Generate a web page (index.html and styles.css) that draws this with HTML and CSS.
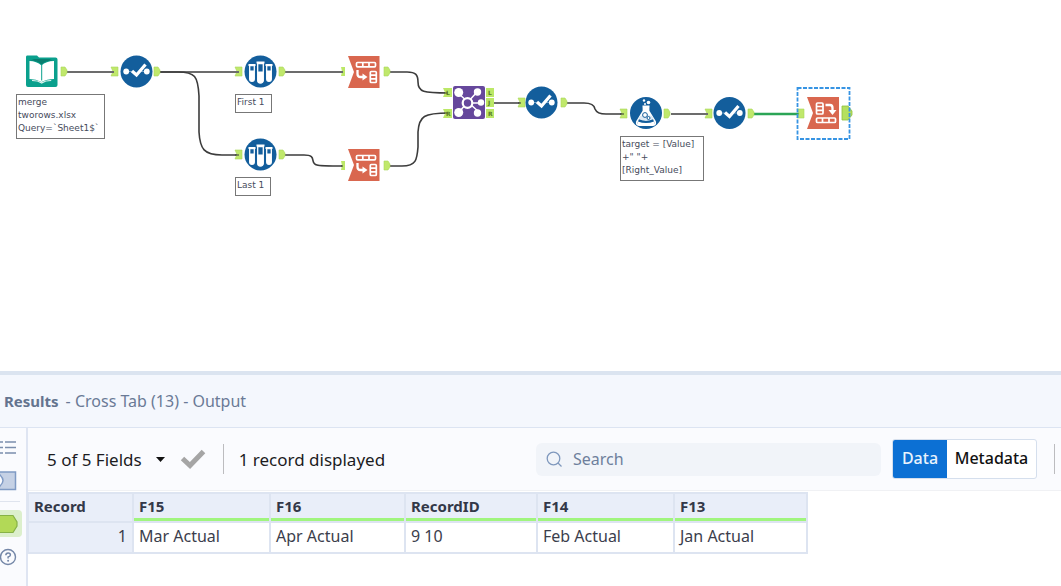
FILE: index.html
```html
<!DOCTYPE html>
<html lang="en">
<head>
<meta charset="utf-8">
<title>Workflow - Cross Tab results</title>
<link rel="stylesheet" href="styles.css">
</head>
<body>
<main class="app">
  <section class="canvas" aria-label="Workflow canvas">
    <svg class="diagram" width="1061" height="371" viewBox="0 0 1061 371" aria-hidden="true">
      <defs>
        <g id="port-in"><path d="M0 0h7v9H0l2-4.5z" fill="#c0e86c" stroke="#a9d65a" stroke-width=".6"/></g>
        <g id="port-out"><path d="M0 0h4l2 3v3l-2 3H0z" fill="#c0e86c" stroke="#a9d65a" stroke-width=".6"/></g>
        <g id="select">
          <circle r="16" fill="#135e9c"/>
          <path d="M-10 0H-4M2 0H10" stroke="#6e9fc8" stroke-width="1"/>
          <path d="M-4.500-.5L0 3.500 9-7" fill="none" stroke="#fff" stroke-width="3.200"/>
          <circle cx="-10.300" cy="0" r="2.900" fill="#fff"/>
          <circle cx="10.300" cy="0" r="2.900" fill="#fff"/>
        </g>
        <g id="sample">
          <circle r="16" fill="#135e9c"/>
          <g fill="#135e9c" stroke="#fff" stroke-width="1.300">
            <path d="M-10.800-6V7.500a2 2 0 0 0 4.600 0V-6zM6.200-6V7.500a2 2 0 0 0 4.600 0V-6z"/>
            <path d="M-2.800-8V9a2.800 2.500 0 0 0 5.600 0V-8z"/>
          </g>
          <path d="M-10.800-1h4.600v8.500a2 2 0 0 1-4.600 0zM6.200-1h4.600v8.500a2 2 0 0 1-4.600 0zM-2.800 0h5.600v9a2.800 2.500 0 0 1-5.600 0z" fill="#fff"/>
          <path d="M-12-6.500h7M5-6.500h7M-4-9h8" stroke="#fff" stroke-width="2"/>
        </g>
        <g id="transpose">
          <path d="M0 0H31.500V32H0L6 16z" fill="#d9674f"/>
          <g fill="#d9674f" stroke="#fff" stroke-width="1.700">
            <rect x="8.500" y="6.500" width="19" height="4.300" rx="1"/>
            <path d="M14.800 6.500V11M21 6.500V11"/>
            <rect x="22.300" y="15.500" width="6" height="11" rx="1"/>
            <path d="M22.500 19.200h6M22.500 22.800h6"/>
          </g>
          <path d="M9.500 14v4q0 3 3 3H16" fill="none" stroke="#fff" stroke-width="2.300"/>
          <path d="M14.500 17.500l5 3.500-5 3.500z" fill="#fff"/>
        </g>
      </defs>

      <g class="wires">
        <path class="wire-grey" d="M67 72H113"/>
        <path class="wire-grey" d="M160 72H238M285 72H343M671 114H708"/>
        <path d="M160 72H178C195 72 198 76 199 96V132C200 149 204 155 222 155H238"/>
        <path d="M285 155H304C318 155 309 163 317 165Q320 166 343 166"/>
        <path d="M390 72H407C416 72 418 75 418 82C418 92 423 93 449 93"/>
        <path d="M390 166H402C416 166 417 160 418 147V132C419 116 424 113 449 113"/>
        <path d="M494 103H521M566 103H584Q594 103 595 109Q597 114 606 114H624"/>
        <path class="wire-green" d="M754 114H800"/>
      </g>

      <g class="ports">
        <use href="#port-out" x="61" y="67"/>
        <use href="#port-in" x="111" y="67"/><use href="#port-out" x="154" y="67"/>
        <use href="#port-in" x="235" y="67"/><use href="#port-out" x="279" y="67"/>
        <use href="#port-in" x="235" y="150"/><use href="#port-out" x="279" y="150"/>
        <path d="M341 67h4v9h-4l1-4.500zM341 161h4v9h-4l1-4.500z" fill="#bce867"/>
        <use href="#port-out" x="384" y="67"/><use href="#port-out" x="384" y="161"/>
        <path d="M443 88h9v9h-9l2-4.500zM443 109h9v9h-9l2-4.500zM486 88h8v9h-8zM486 98h8v9h-8zM486 109h8v9h-8z" fill="#bce867"/>
        <use href="#port-in" x="518" y="98"/><use href="#port-out" x="561" y="98"/>
        <use href="#port-in" x="620" y="109"/><use href="#port-out" x="664" y="109"/>
        <use href="#port-in" x="705" y="109"/><use href="#port-out" x="748" y="109"/>
        <use href="#port-in" x="797" y="109"/>
        <path d="M842 106h6l4 5v4l-4 5h-6z" fill="#b5e05e" stroke="#8fc03f" stroke-width=".8"/>
      </g>
      <path class="wire-grey" d="M111 72h3M235 72h4M341 72h2M705 114h3" />
      <path d="M235 155h4M341 166h2M444 93h4M444 113h4M518 103h3M620 114h4" stroke="#333"/>
      <g class="port-letters">
        <text x="446" y="95">L</text><text x="446" y="116">R</text>
        <text x="488" y="95">L</text><text x="488" y="105">J</text><text x="488" y="116">R</text>
      </g>

      <g transform="translate(26 56)">
        <path d="M1-.5H11l2 2H29.500q2 0 2 2V29q0 2-2 2H2q-2 0-2-2V1q0-1.500 1-1.500z" fill="#0aa08d"/>
        <path d="M3.500 5q7 0 12 4.500Q20 5 28 5v18q-7 0-12.500 3Q10 23 3.500 23z" fill="#fff"/>
        <path d="M4.500 4.500q7 0 11 4 4-4 11-4l-3-1.500H8z" fill="#087f70"/>
        <path d="M15.700 9v15.500" stroke="#0aa08d"/>
        <path d="M6 24.500q6 0 9.700 2.500 3.500-2.500 9.500-2.500" fill="none" stroke="#dff4f0" stroke-width="1.200"/>
      </g>
      <use href="#select" x="136.500" y="71.500"/>
      <use href="#sample" x="260.500" y="71.500"/>
      <use href="#sample" x="260.500" y="154.500"/>
      <use href="#transpose" x="348" y="56"/>
      <use href="#transpose" x="348" y="149"/>
      <g transform="translate(453 86)">
        <rect width="32" height="33" rx="2" fill="#66489c"/>
        <path d="M5 7L27 27M24 6L5 27M15 17H28" stroke="#fff" stroke-width="1.500"/>
        <circle cx="14.500" cy="17" r="4.800" fill="#66489c" stroke="#fff" stroke-width="2.200"/>
        <g fill="#fff"><circle cx="5.700" cy="6.500" r="4.500"/><circle cx="24.500" cy="6" r="3.700"/><circle cx="28" cy="16.500" r="3.200"/><circle cx="24.500" cy="27" r="3.700"/><circle cx="5.700" cy="26.500" r="4.500"/></g>
      </g>
      <use href="#select" x="541.500" y="102.500"/>
      <g transform="translate(646 113)">
        <circle r="16" fill="#135e9c"/>
        <path d="M-3.500-6.500H3.500M-2.500-6V-2L-9 8.500Q-10 12-7 12H7Q10 12 9 8.500L2.500-2V-6" fill="none" stroke="#fff" stroke-width="1.800"/>
        <path d="M-2.800-6h5.600v5L6 4H-6l3.200-5z" fill="#fff"/>
        <path d="M-6 3Q0 1 6 3L7.500 6Q0 10-7.500 6z" fill="#dce9f4"/>
        <path d="M-8 8.500Q0 11.500 8 8.500 9 11.500 7 11.500H-7Q-9 11.500-8 8.500z" fill="#fff"/>
        <circle cx="-1" cy="2" r="2.400" fill="#fff" stroke="#135e9c"/><circle cx="2.500" cy="5" r="1.500" fill="#fff" stroke="#135e9c"/>
        <path d="M-7.500 7Q0 10.500 7.500 7" fill="none" stroke="#135e9c" stroke-width="1.300"/>
        <circle cx="-2" cy="-12.500" r="1.200" fill="#fff"/><circle cx="2.500" cy="-10.500" r="1.800" fill="#fff"/><circle cx="-1" cy="-9" r="1" fill="#fff"/>
      </g>
      <use href="#select" x="729.500" y="113"/>
      <g transform="translate(807 97)">
        <path d="M0 0H32V32H0L6 16z" fill="#d9674f"/>
        <g fill="#d9674f" stroke="#fff" stroke-width="1.700">
          <rect x="9.500" y="6" width="6.500" height="11" rx="1"/>
          <path d="M9.500 9.500h7M9.500 13.300h7"/>
          <rect x="9.500" y="21" width="19" height="4.500" rx="1"/>
          <path d="M15.500 21v5M22 21v5"/>
        </g>
        <path d="M18.500 8H23q2.500 0 2.500 3v3" fill="none" stroke="#fff" stroke-width="2.300"/>
        <path d="M21.500 13h8l-4 5z" fill="#fff"/>
      </g>
      <rect x="797.500" y="88" width="52" height="51" fill="none" stroke="#3794e3" stroke-width="1.800" stroke-dasharray="4 1.500"/>
    </svg>
    <div class="note note-input">merge<br>tworows.xlsx<br>Query=`Sheet1$`</div>
    <div class="note note-first">First 1</div>
    <div class="note note-last">Last 1</div>
    <div class="note note-formula">target = [Value]<br>+" "+<br>[Right_Value]</div>
  </section>

  <section class="results" aria-label="Results">
    <header class="title"><h1>Results</h1><span>- Cross Tab (13) - Output</span></header>
    <div class="body">
      <nav class="rail" aria-label="Result views">
        <button class="rail-btn" aria-label="Messages"><svg width="18" height="16" viewBox="0 0 18 16"><path d="M0 2h3M5 2h11M0 7.500h3M5 7.500h11M0 13h3M5 13h11" stroke="#7b8ead" stroke-width="1.500"/></svg></button>
        <button class="rail-btn rail-input" aria-label="Input anchor"><svg width="18" height="20" viewBox="0 0 18 20"><path d="M-2 1H15.500V18.500H-2L0 15Q3 12 3 9.500 3 7 0 4z" fill="#c5d1e5" stroke="#7f9ac4" stroke-width="1.500"/></svg></button>
        <button class="rail-btn rail-active" aria-label="Output anchor"><svg width="20" height="20" viewBox="0 0 20 20"><path d="M-2 1.500H13L17 8v4l-4 6.500H-2z" fill="#b2d957" stroke="#86b246" stroke-width="1.200"/></svg></button>
        <button class="rail-btn rail-help" aria-label="Help"><svg width="18" height="18" viewBox="0 0 18 18"><circle cx="8" cy="9" r="7.500" fill="none" stroke="#7487a8" stroke-width="1.400"/><path d="M5.800 7.200Q6 5 8.200 5q2.200 0 2.200 1.900Q10.400 8.200 8.100 9v1.600" fill="none" stroke="#7487a8" stroke-width="1.500"/><circle cx="8.100" cy="12.700" r="1" fill="#7487a8"/></svg></button>
      </nav>
      <div class="content">
        <div class="toolbar">
          <button class="fields">5 of 5 Fields<svg width="9" height="5" viewBox="0 0 9 5"><path d="M0 0h9L4.500 5z" fill="#111"/></svg></button>
          <button class="apply" aria-label="Apply"><svg width="26" height="22" viewBox="0 0 26 22"><path d="M2.500 10.500L10 17.500 23.500 3.500" fill="none" stroke="#a5a5a5" stroke-width="5"/></svg></button>
          <span class="rule"></span>
          <span class="count">1 record displayed</span>
          <label class="search"><svg width="17" height="17" viewBox="0 0 17 17"><circle cx="7.500" cy="7.500" r="6.300" fill="none" stroke="#7f98bd" stroke-width="1.300"/><path d="M12 12l3.500 3.500" stroke="#7f98bd" stroke-width="1.300"/></svg><input type="text" placeholder="Search" aria-label="Search"></label>
          <div class="switch"><button class="on">Data</button><button>Metadata</button></div>
          <span class="rule"></span>
        </div>
        <table class="grid">
          <colgroup><col class="c-record"><col class="c-137"><col class="c-135"><col class="c-132"><col class="c-137"><col class="c-133"></colgroup>
          <thead><tr><th>Record</th><th>F15</th><th>F16</th><th>RecordID</th><th>F14</th><th>F13</th></tr></thead>
          <tbody><tr><th scope="row">1</th><td>Mar Actual</td><td>Apr Actual</td><td>9 10</td><td>Feb Actual</td><td>Jan Actual</td></tr></tbody>
        </table>
      </div>
    </div>
  </section>
</main>
</body>
</html>
```
FILE: styles.css
```css
* { box-sizing: border-box; }
body { margin: 0; background: #fff; font-family: "Noto Sans", "Open Sans", sans-serif; font-size: 16px; color: #1c1c1f; }
button, input { font: inherit; color: inherit; border: 0; background: none; padding: 0; margin: 0; }
svg { display: block; flex: none; }
.app { display: flex; flex-direction: column; min-height: 100vh; }

.canvas { position: relative; overflow: hidden; }
.wires { fill: none; stroke: #3c3c3c; stroke-width: 1.6; }
.wire-grey { stroke: #6c6c6c; stroke-width: 2; }
.wire-green { stroke: #2ba556; stroke-width: 2.4; }
.port-letters { font: 700 6px "DejaVu Sans", sans-serif; fill: #587a27; }
.note { position: absolute; border: 1px solid #777; background: #fff; padding: 1px; font: 9px/13px "DejaVu Sans", sans-serif; color: #464b5c; white-space: nowrap; }
.note-input { left: 16px; top: 94px; width: 89px; height: 45px; }
.note-first { left: 235px; top: 94px; width: 37px; height: 19px; }
.note-last { left: 235px; top: 177px; width: 36px; height: 19px; }
.note-formula { left: 620px; top: 136px; width: 84px; height: 45px; }

.results { flex: 1; display: flex; flex-direction: column; border-top: 4px solid #dbe4f0; }
.title { display: flex; align-items: center; gap: 7px; height: 53px; padding-left: 4px; background: #f4f7fd; border-bottom: 1px solid #dce4f2; color: #6a7a96; }
.title h1 { margin: 0; font-size: 15px; font-weight: 700; color: #64748f; }
.body { flex: 1; display: flex; }
.rail { width: 28px; flex: none; background: #fafbfe; border-right: 2px solid #dfe5f2; padding-top: 12px; }
.rail-btn { display: flex; align-items: center; width: 100%; height: 16px; }
.rail-input { height: 46px; padding-top: 4px; border-bottom: 1px solid #dfe4ee; width: 20px; }
.rail-active { width: 22px; height: 27px; margin-top: 8px; background: #dcefcc; border-radius: 0 4px 4px 0; }
.rail-help { height: 18px; margin-top: 11px; }
.content { flex: 1; min-width: 0; }
.toolbar { display: flex; align-items: center; height: 63px; padding: 0 6px 0 19px; background: #fafbfe; border-bottom: 1px solid #f0f1f4; }
.fields { display: flex; align-items: center; gap: 14px; font-size: 17px; }
.apply { margin: 0 17px 0 15px; }
.rule { width: 1px; height: 30px; background: #bcbcbf; }
.count { margin-left: 15px; font-size: 17px; white-space: nowrap; }
.search { display: flex; align-items: center; gap: 10px; width: 345px; height: 33px; margin-left: auto; padding-left: 10px; background: #f1f4f9; border-radius: 6px; }
.search input { flex: 1; min-width: 0; outline: 0; }
.search input::placeholder { color: #6e7f9c; opacity: 1; }
.switch { display: flex; height: 40px; margin: 0 17px 0 11px; border: 1px solid #d5dfed; border-radius: 3px; overflow: hidden; background: #fff; font-weight: 500; color: #111; }
.switch button { width: 89px; padding-bottom: 2px; }
.switch .on { width: 54px; background: #0c70d4; color: #e9f3fd; }

.grid { table-layout: fixed; border-collapse: collapse; margin: 1px 0 0 -1px; width: 779px; font-size: 16px; line-height: 22px; color: #3b3e4c; }
.c-record { width: 105px; }
.c-137 { width: 137px; }
.c-135 { width: 135px; }
.c-132 { width: 132px; }
.c-133 { width: 133px; }
.grid th, .grid td { border: 2px solid #dde4f1; padding: 0 5px 4px; text-align: left; }
.grid th { background: #e9eef9; }
.grid thead th { height: 29px; font-size: 15px; font-weight: 700; color: #333848; }
.grid thead th + th { box-shadow: inset 0 -3px #a0f57e; }
.grid tbody th { height: 31px; text-align: right; font-weight: 400; }
```
